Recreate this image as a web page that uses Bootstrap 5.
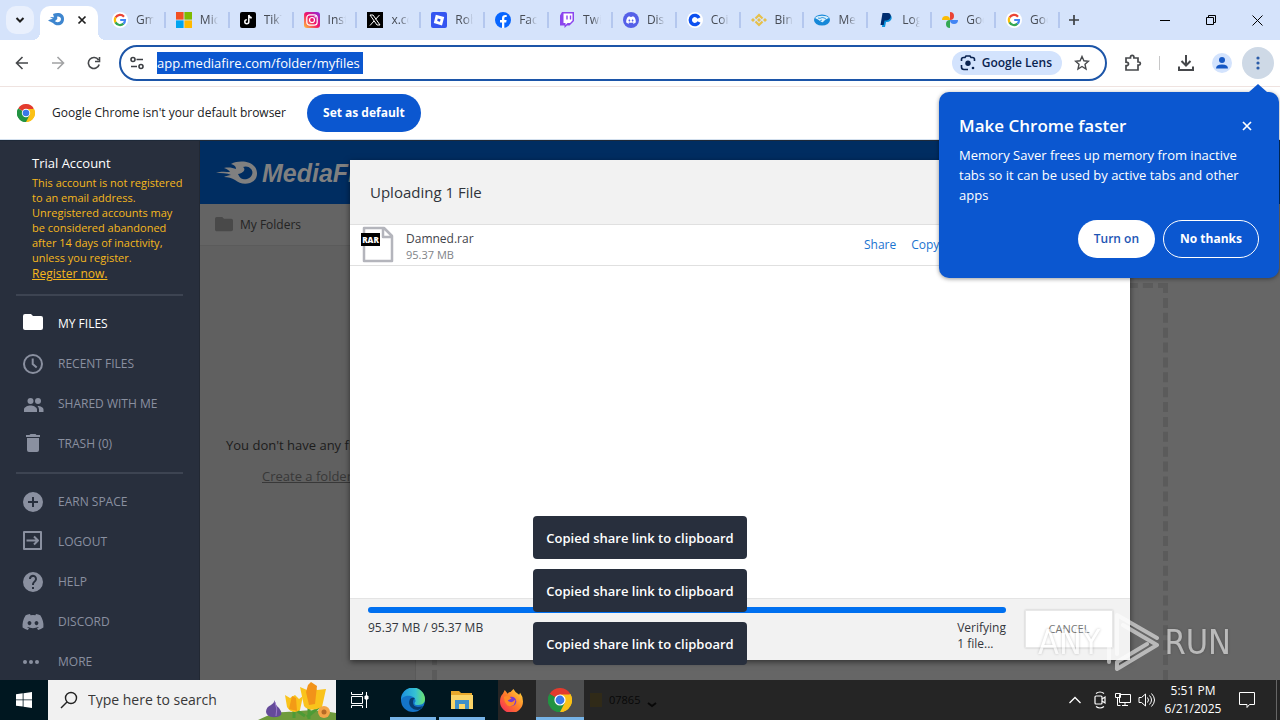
<!DOCTYPE html>
<html lang="en">
<head>
<meta charset="utf-8">
<meta name="viewport" content="width=device-width, initial-scale=1">
<title>My Files - MediaFire</title>
<link href="https://cdn.jsdelivr.net/npm/bootstrap@5.3.0/dist/css/bootstrap.min.css" rel="stylesheet">
<style>
body{font-family:"Open Sans","Noto Sans",sans-serif;font-size:12px;line-height:16px;color:#202124;height:100vh;overflow:hidden}
button{font-family:inherit}
svg{flex:none;display:block}
.bare{border:0;background:none;padding:0;color:inherit}
/* browser chrome */
.tabstrip{height:40px;background:#d5e3fb;flex:none}
.tab-menu{width:28px;height:28px;border-radius:10px;background:#e9f0fd;margin:6px 6px 0 6px}
.tab-active{width:58px;height:34px;margin-top:6px;background:#fff;border-radius:10px 10px 0 0;position:relative}
.tab-active::before,.tab-active::after{content:"";position:absolute;bottom:0;width:8px;height:8px}
.tab-active::before{right:100%;background:radial-gradient(circle at 0 0,transparent 8px,#fff 8px)}
.tab-active::after{left:100%;background:radial-gradient(circle at 100% 0,transparent 8px,#fff 8px)}
.tabs{flex:0 1 962px;min-width:0;height:40px;padding-left:4px}
.tab{flex:1 1 0;min-width:0;height:16px;border-right:2px solid #b4c7ee;padding-left:10px;gap:8px;color:#474c55;text-decoration:none}
.tab span{width:18px;overflow:hidden;white-space:nowrap;-webkit-mask-image:linear-gradient(90deg,#000 50%,transparent);mask-image:linear-gradient(90deg,#000 50%,transparent)}
.win-btn{width:46px;height:40px}
.toolbar{height:46px;background:#fff;flex:none;padding:0 6px 0 4px}
.tool{width:36px;height:36px;color:#46484b}
.omnibox{height:36px;border:2px solid #1c55a8;border-radius:18px;margin-left:7px}
.url{width:206px;height:22px;border:0;padding:0;background:#0b57d0;color:#fff;font-size:13px;outline:0}
.lens{height:24px;border-radius:12px;background:#d3e3fd;color:#0a2350;font-weight:600;padding:0 10px 0 8px;gap:6px}
.star{padding:0 15px 0 12px}
.tool-menu{width:32px;height:32px;border-radius:50%;background:#ced9e6;color:#2b5ca8;margin-left:2px}
.infobar{height:54px;border-top:1px solid #efe3e0;border-bottom:1px solid #d3e0ee;padding-left:17px;gap:17px;flex:none;background:#fff}
.pill{height:38px;border-radius:19px;padding:0 16px;font-weight:700;border:0}
.pill-blue{background:#0b57d0;color:#fff}
.pill-white{background:#fff;color:#1c55b5}
.promo{position:absolute;top:92px;right:1px;width:340px;height:186px;background:#0b57d0;border-radius:10px;color:#fff;padding:20px;z-index:30;box-shadow:0 1px 4px #0006}
.promo::before{content:"";position:absolute;right:12px;bottom:100%;border:9px solid transparent;border-top:0;border-bottom:8px solid #0b57d0}
.promo h2{font-size:17px;line-height:28px;font-weight:600;margin:0}
.promo p{font-size:13px;line-height:20px;margin:5px 0 15px}
/* web page */
.page{flex:1 1 0;min-height:0;overflow:hidden;border-top:1px solid #1e2938}
.side{width:200px;flex:none;background:#282f3d;border-right:1px solid #222833;color:#8a90a0}
.side h1{font-size:13px;line-height:20px;margin:0;color:#fff;font-weight:400}
.account{padding:12px 16px 12px 32px;color:#f6b81c}
.account p{font-size:11px;line-height:15px;margin:2px 0 1px;white-space:nowrap}
.account a{color:#f6b81c;display:block}
.rule{height:2px;background:#3d4452;margin:0 16px 8px;flex:none}
.side-link{height:40px;padding-left:21px;gap:13px;color:#8a90a0;text-decoration:none;flex:none}
.side-link.on{color:#fff}
.stage{background:#666;color:#1c1c1c;min-width:0;position:relative}
.site-head{height:63px;background:#002d61;color:#808080;padding-left:16px;flex:none}
.brand-name{font:italic 700 25px/30px "Liberation Sans",sans-serif}
.folders{width:216px;background:#606060;border-right:1px solid #5a5a5a;flex:none}
.folders-head{height:42px;background:#646464;border-bottom:1px solid #5b5b5b;padding-left:15px;gap:7px;color:#232323}
.empty{padding:189px 0 0 26px;font-size:13px;line-height:20px;white-space:nowrap}
.empty a{color:#383838;display:block;margin:11px 0 0 36px}
.dropzone{margin:79px 112px 0 16px;border:5px dashed #5b5b5b;border-bottom:0;flex:1}
.veil{position:absolute;inset:19px 0 20px;z-index:5}
.upload{width:780px;max-width:100%;background:#fff;box-shadow:0 2px 6px #0008}
.upload-head{height:65px;background:#f2f2f2;border-bottom:1px solid #e0e0e0;padding-left:20px;font-size:15px;color:#30343b}
.upload-row{height:41px;border-bottom:1px solid #e0e0e0;padding-left:10px;color:#3f444b}
.upload-row small{font-size:11px;line-height:16px;color:#808388}
.upload-row a{color:#1a73d0;text-decoration:none}
.upload-actions{gap:15px;width:266px}
.upload-foot{height:62px;background:#f2f2f2;border-top:1px solid #e4e4e4;padding:8px 17px 0 18px;gap:19px;color:#34373d}
.upload-foot .progress{height:6px;border-radius:3px;margin-bottom:7px}
.upload-foot .progress-bar{background:#0070f0}
.cancel{width:88px;height:38px;margin-top:3px;background:#fff;border:1px solid #e8e8e8;box-shadow:0 0 2px #0003;font-size:11px;color:#777}
.toasts{position:absolute;bottom:55px;left:0;right:0;z-index:10;gap:10px;pointer-events:none}
.note{height:43px;border-radius:4px;background:#282f3d;color:#fff;font-weight:600;font-size:13px;padding:0 13px}
.mark-any{position:absolute;right:49px;bottom:48px;z-index:20;color:#fff;font-family:"Liberation Sans Narrow","DejaVu Sans Condensed",sans-serif;font-size:34px;line-height:60px;gap:4px;opacity:.55;text-shadow:0 0 3px #0006;pointer-events:none}
/* taskbar */
.taskbar{height:40px;flex:none;background:#252525;color:#fff}
.task-left{background:linear-gradient(90deg,#001720 498px,#252525 498px)}
.task-btn{width:48px;height:40px;margin-right:1px}
.task-btn.open{border-bottom:3px solid #76b4e8;padding-top:3px}
.task-btn.narrow{border-image:linear-gradient(90deg,#0000 4px,#76b4e8 4px 44px,#0000 44px) 3}
.task-btn.current{background:#4e4f50}
.search{width:288px;background:#f1f1f1;color:#222;padding-left:12px;gap:10px}
.search input{border:0;background:none;outline:0;padding:0;width:160px;font-size:14px;color:#333}
.search input::placeholder{color:#383838}
.ghost{color:#080808;padding-left:6px;gap:7px;font-size:11px}
.tray{gap:7px;padding-right:3px}
.clock{width:60px;line-height:18px;text-align:center}
.show-desk{width:1px;height:40px;background:#666;margin-left:13px}
</style>
</head>
<body class="d-flex flex-column position-relative">

<svg width="0" height="0" class="position-absolute" aria-hidden="true">
 <symbol id="g" viewBox="0 0 16 16"><circle cx="8" cy="8" r="8" fill="#fff"/><g fill="none" stroke-width="2.2"><path d="M12 4.7A5.1 5.1 0 0 0 3.6 5.6" stroke="#ea4335"/><path d="M3.6 5.4a5.1 5.1 0 0 0 0 5.2" stroke="#fbbc05"/><path d="M3.5 10.4a5.1 5.1 0 0 0 8 1.2" stroke="#34a853"/><path d="M11.4 11.8A5 5 0 0 0 13 8H8.2" stroke="#4285f4"/></g></symbol>
 <symbol id="chrome" viewBox="0 0 24 24"><path d="M12 12 1.6 6A12 12 0 0 1 22.4 6z" fill="#e33b2e"/><path d="M12 12 22.4 6A12 12 0 0 1 12 24z" fill="#fbc116"/><path d="M12 12V24A12 12 0 0 1 1.6 6z" fill="#229342"/><path d="M12 6.5h10.6A12 12 0 0 1 12 24l4.8-9.2z" fill="#fbc116"/><path d="M12 24 16.8 14.8 7.2 14.7 1.6 6A12 12 0 0 0 12 24z" fill="#229342"/><circle cx="12" cy="12" r="5.6" fill="#fff"/><circle cx="12" cy="12" r="4.4" fill="#3b78e7"/></symbol>
 <symbol id="flame" viewBox="0 0 42 24"><path fill="currentColor" fill-rule="evenodd" d="M0 12c5-2 10-1 14-1-1-2-3-3-6-4 5-1 9 0 12 1 0-3-2-4-5-5 8-4 19-3 24 3 4 6 2 14-5 16-6 2-11 0-15-3-3-2-7-3-11-3 2-1 5-2 7-2-4-2-10-2-15-2zM22 13c2 5 6 6 9 5 5-1 7-7 4-10-2-3-6-3-8-2 3 2 1 6-5 7z"/></symbol>
 <symbol id="folder" viewBox="0 0 24 24"><path fill="currentColor" d="M10 4H4a2 2 0 0 0-2 2v12c0 1.100.9 2 2 2h16a2 2 0 0 0 2-2V8a2 2 0 0 0-2-2h-8z"/></symbol>
 <symbol id="disc" viewBox="0 0 24 24"><path fill="currentColor" d="M19.300 5.300A17 17 0 0 0 15 4l-.6 1.200a16 16 0 0 0-4.800 0L9 4a17 17 0 0 0-4.300 1.300C2 9.400 1.200 13.500 1.600 17.500A17 17 0 0 0 6.900 20l1.100-1.800-1.700-.8.4-.3c3.300 1.500 7.200 1.500 10.600 0l.4.3-1.700.8 1.100 1.800a17 17 0 0 0 5.300-2.500c.5-4.700-.8-8.700-3.100-12.200zM8.500 15.200c-1 0-1.900-1-1.900-2.100s.8-2.100 1.900-2.100 1.900 1 1.900 2.100-.8 2.100-1.900 2.100zm7 0c-1 0-1.900-1-1.900-2.100s.8-2.100 1.900-2.100 1.900 1 1.900 2.100-.8 2.100-1.900 2.100z"/></symbol>
</svg>

<header class="tabstrip d-flex">
 <button class="bare tab-menu d-flex align-items-center justify-content-center" aria-label="Search tabs"><svg width="10" height="8" viewBox="0 0 10 8"><path d="M1.500 2 5 5.500 8.500 2" fill="none" stroke="#1f1f1f" stroke-width="2"/></svg></button>
 <div class="tab-active d-flex align-items-start justify-content-between px-2 pt-1">
  <svg width="16" height="20" viewBox="0 -3 16 20"><path fill="#3e86cf" fill-rule="evenodd" d="M0 7.500C2 6 4 6 5 6L2 4l4 .3L5 1c5-2 11-1 11 5 0 7-8 8-11 4L0 7.500zM7 8c1 2 6 1.500 6-2 0-2-3-3-4-2 1 1 0 3-2 4z"/></svg>
  <button class="bare" aria-label="Close tab"><svg width="16" height="20" viewBox="0 -2 16 20"><path d="m4.500 4.500 7 7m0-7-7 7" stroke="#1f1f1f" stroke-width="1.700"/></svg></button>
 </div>
 <nav class="tabs d-flex align-items-center">
  <a href="#" class="tab d-flex align-items-center"><svg width="16" height="16"><use href="#g"/></svg><span>Gmail</span></a>
  <a href="#" class="tab d-flex align-items-center"><svg width="16" height="16" viewBox="0 0 16 16"><path d="M0 0h7.600v7.600H0z" fill="#f25022"/><path d="M8.400 0H16v7.600H8.400z" fill="#7fba00"/><path d="M0 8.400h7.600V16H0z" fill="#00a4ef"/><path d="M8.400 8.400H16V16H8.400z" fill="#ffb900"/></svg><span>Micro</span></a>
  <a href="#" class="tab d-flex align-items-center"><svg width="16" height="16" viewBox="0 0 16 16"><rect width="16" height="16" rx="2" fill="#000"/><path d="M8.800 3v6.800a2 2 0 1 1-2-2M8.800 3c.3 1.700 1.400 2.700 3 2.800" fill="none" stroke="#fff" stroke-width="1.500"/></svg><span>TikTok</span></a>
  <a href="#" class="tab d-flex align-items-center"><svg width="16" height="16" viewBox="0 0 16 16"><defs><linearGradient id="ig" x1="0" y1="1" x2="1" y2="0"><stop stop-color="#ffc43a"/><stop offset=".5" stop-color="#f0146a"/><stop offset="1" stop-color="#8a2be2"/></linearGradient></defs><rect width="16" height="16" rx="3" fill="url(#ig)"/><g fill="none" stroke="#fff" stroke-width="1.200"><rect x="2.800" y="2.800" width="10.400" height="10.400" rx="3"/><circle cx="8" cy="8" r="2.500"/></g><circle cx="11.200" cy="4.800" r=".8" fill="#fff"/></svg><span>Instag</span></a>
  <a href="#" class="tab d-flex align-items-center"><svg width="16" height="16" viewBox="0 0 16 16"><path fill="#000" d="M0 0h16v16H0z"/><path d="m3 3 7 10h3L6 3zM12.500 3l-4 4.400M7 9l-4 4.500" fill="none" stroke="#fff"/></svg><span>x.com</span></a>
  <a href="#" class="tab d-flex align-items-center"><svg width="16" height="16" viewBox="0 0 16 16"><rect width="16" height="16" rx="2" fill="#3555f0"/><path fill="#fff" fill-rule="evenodd" d="m4.800 2.800 8.400 2.200-2.200 8.400L2.800 11zm2 3.700-.6 2.600 2.800.7.600-2.600z"/></svg><span>Roblox</span></a>
  <a href="#" class="tab d-flex align-items-center"><svg width="16" height="16" viewBox="0 0 16 16"><circle cx="8" cy="8" r="8" fill="#0866ff"/><path fill="#fff" d="M7 16v-5.500H5V8h2V6.300C7 4 8.300 3 10.500 3l1.200.1v2h-1C9.600 5.100 9.300 5.700 9.300 6.500V8h2.300l-.4 2.500H9.300V16z"/></svg><span>Faceb</span></a>
  <a href="#" class="tab d-flex align-items-center"><svg width="16" height="16" viewBox="0 0 16 16"><path fill="#8b45ee" d="M3 0h12v9l-4.500 4.500H8L5.500 16v-2.500H1v-10z"/><path fill="#fff" d="M4.500 1.500h9v7l-2.500 2.500H8.500l-2 2v-2h-2z"/><path d="M8 3.500v4m3.500-4v4" stroke="#8b45ee" stroke-width="1.400"/></svg><span>Twitch</span></a>
  <a href="#" class="tab d-flex align-items-center"><svg width="16" height="16" viewBox="0 0 16 16"><circle cx="8" cy="8" r="8" fill="#5560e8"/><svg x="2.500" y="2.500" width="11" height="11" color="#fff"><use href="#disc"/></svg></svg><span>Disco</span></a>
  <a href="#" class="tab d-flex align-items-center"><svg width="16" height="16" viewBox="0 0 16 16"><circle cx="8" cy="8" r="8" fill="#fff"/><path d="M12 6a4.600 4.600 0 1 0 0 4" fill="none" stroke="#0c50f0" stroke-width="3.400"/></svg><span>Coinb</span></a>
  <a href="#" class="tab d-flex align-items-center"><svg width="16" height="16" viewBox="0 0 16 16"><g fill="none" stroke="#e6c04a" stroke-width="2.200"><path d="M4.500 6.500 8 3l3.500 3.500m-7 3L8 13l3.500-3.500"/></g><path fill="#e6c04a" d="m8 6 2 2-2 2-2-2zM2 6l2 2-2 2-2-2zm12 0 2 2-2 2-2-2z"/></svg><span>Binan</span></a>
  <a href="#" class="tab d-flex align-items-center"><svg width="16" height="16" viewBox="0 0 16 16"><ellipse cx="8" cy="8" rx="8" ry="5.500" fill="#1688d8"/><path fill="#d8effc" d="M1 6c2-3 12-3 14 0-2 1-3 1-4 2l-2 2c-1 .5-2 0-3-1C4 7.500 3 7 1 6z"/><path d="M4 6q2 1 4-.5 2 0 4 1.500M6 9l2-1" fill="none" stroke="#1688d8" stroke-width=".8"/></svg><span>Merca</span></a>
  <a href="#" class="tab d-flex align-items-center"><svg width="16" height="16" viewBox="0 0 16 16"><path fill="#0b93dc" d="M5 3h7c3 1 2 7-3 7H8l-1 5H4z"/><path fill="#002d70" d="M4.500 1H10c4 0 4 7-1.500 7.500H6.500L5.700 13H2.500z"/></svg><span>Log in</span></a>
  <a href="#" class="tab d-flex align-items-center"><svg width="16" height="16" viewBox="0 0 16 16"><path fill="#ea4335" d="M8 0a4 4 0 0 1 0 8z"/><path fill="#4285f4" d="M16 8a4 4 0 0 1-8 0z"/><path fill="#34a853" d="M8 16a4 4 0 0 1 0-8z"/><path fill="#fbbc04" d="M0 8a4 4 0 0 1 8 0z"/></svg><span>Goog</span></a>
  <a href="#" class="tab d-flex align-items-center"><svg width="16" height="16"><use href="#g"/></svg><span>Goog</span></a>
 </nav>
 <button class="bare px-2" aria-label="New tab"><svg width="12" height="12" viewBox="0 0 12 12"><path d="M6 1v10M1 6h10" stroke="#3c4043" stroke-width="1.700"/></svg></button>
 <div class="d-flex ms-auto">
  <button class="bare win-btn d-flex align-items-center justify-content-center" aria-label="Minimize"><svg width="10" height="10"><path d="M0 5.500h10" stroke="#000"/></svg></button>
  <button class="bare win-btn d-flex align-items-center justify-content-center" aria-label="Restore"><svg width="10" height="10"><path d="M.500 2.500h7v7h-7zM2.500 2.500v-2h7v7h-2" fill="none" stroke="#000"/></svg></button>
  <button class="bare win-btn d-flex align-items-center justify-content-center" aria-label="Close"><svg width="11" height="11"><path d="m.500.500 10 10m0-10-10 10" stroke="#000"/></svg></button>
 </div>
</header>

<div class="toolbar d-flex align-items-center">
 <button class="bare tool d-flex align-items-center justify-content-center" aria-label="Back"><svg width="14" height="14" viewBox="0 0 14 14"><path d="M13 7H2m5.500-6L1.500 7l6 6" fill="none" stroke="currentColor" stroke-width="1.600"/></svg></button>
 <button class="bare tool d-flex align-items-center justify-content-center opacity-50" aria-label="Forward"><svg width="14" height="14" viewBox="0 0 14 14"><path d="M1 7h11M6.500 1l6 6-6 6" fill="none" stroke="currentColor" stroke-width="1.600"/></svg></button>
 <button class="bare tool d-flex align-items-center justify-content-center" aria-label="Reload"><svg width="14" height="14" viewBox="0 0 14 14"><path d="M12.200 8.500A5.500 5.500 0 1 1 11.500 4M12.500 1v4.500H8" fill="none" stroke="currentColor" stroke-width="1.600"/></svg></button>
 <div class="omnibox d-flex align-items-center flex-grow-1">
  <button class="bare ps-2 pe-2 me-1" aria-label="Site information"><svg width="16" height="14" viewBox="0 0 16 14"><g fill="none" stroke="#3c3f43" stroke-width="1.600"><circle cx="4" cy="3.500" r="2"/><path d="M7.500 3.500H14M2 10.500h6"/><circle cx="12" cy="10.500" r="2"/></g></svg></button>
  <input class="url" type="text" aria-label="Address" value="app.mediafire.com/folder/myfiles">
  <button class="bare lens d-flex align-items-center ms-auto"><svg width="16" height="16" viewBox="0 0 16 16"><path d="M1.500 6V4.500q0-2 2-2H5l1-1.500h4l1 1.500h1.500q2 0 2 2V6M1.500 10v2q0 2.500 2.500 2.500h4" fill="none" stroke="currentColor" stroke-width="1.600"/><circle cx="8" cy="8.200" r="2.700" fill="currentColor"/><circle cx="13" cy="13" r="1.300" fill="currentColor"/></svg>Google Lens</button>
  <button class="bare star" aria-label="Bookmark"><svg width="16" height="16" viewBox="0 0 16 16"><path d="m8 1.500 1.900 4.300 4.600.4L11 9.300l1 4.700-4-2.500L4 14l1-4.700L1.500 6.200l4.600-.4z" fill="none" stroke="#46484b" stroke-width="1.400"/></svg></button>
 </div>
 <button class="bare tool d-flex align-items-center justify-content-center ms-2" aria-label="Extensions"><svg width="18" height="18" viewBox="0 0 18 18"><path d="M2 4h4.500V3a1.700 1.700 0 0 1 3.400 0v1H14v4h.800a1.600 1.600 0 0 1 0 3.200H14V16H2v-4.300q2.500-.200 2.500-1.800T2 8.200z" fill="none" stroke="currentColor" stroke-width="1.700"/></svg></button>
 <div class="vr mx-2 my-3"></div>
 <button class="bare tool d-flex align-items-center justify-content-center" aria-label="Downloads"><svg width="18" height="18" viewBox="0 0 18 18"><path d="M9 1v10M4.500 7 9 11.500 13.500 7M2 12.500V16h14v-3.500" fill="none" stroke="currentColor" stroke-width="2"/></svg></button>
 <button class="bare tool d-flex align-items-center justify-content-center" aria-label="Profile"><svg width="20" height="20" viewBox="0 0 20 20"><circle cx="10" cy="10" r="10" fill="#d3e3fd"/><circle cx="10" cy="7" r="3" fill="#1658c4"/><path d="M4 15.500q0-4 6-4t6 4z" fill="#1658c4"/></svg></button>
 <button class="bare tool-menu d-flex align-items-center justify-content-center" aria-label="Menu"><svg width="4" height="14" fill="currentColor"><circle cx="2" cy="2" r="1.600"/><circle cx="2" cy="7" r="1.600"/><circle cx="2" cy="12" r="1.600"/></svg></button>
</div>

<div class="infobar d-flex align-items-center">
 <svg width="18" height="18"><use href="#chrome"/></svg>
 <span class="me-1">Google Chrome isn't your default browser</span>
 <button class="pill pill-blue">Set as default</button>
</div>

<aside class="promo">
 <div class="d-flex justify-content-between align-items-center"><h2>Make Chrome faster</h2><button class="bare px-1" aria-label="Dismiss"><svg width="16" height="16"><path d="m4 4 8 8m0-8-8 8" stroke="#fff" stroke-width="1.700"/></svg></button></div>
 <p>Memory Saver frees up memory from inactive tabs so it can be used by active tabs and other apps</p>
 <div class="d-flex justify-content-end gap-2"><button class="pill pill-white fw-semibold">Turn on</button><button class="pill pill-blue border border-white">No thanks</button></div>
</aside>

<main class="page d-flex">
 <nav class="side d-flex flex-column">
  <div class="account"><h1>Trial Account</h1>
   <p>This account is not registered<br>to an email address.<br>Unregistered accounts may<br>be considered abandoned<br>after 14 days of inactivity,<br>unless you register.</p><a href="#">Register now.</a></div>
  <div class="rule"></div>
  <a href="#" class="side-link on d-flex align-items-center"><svg width="24" height="24" viewBox="0 2 24 24"><use href="#folder" width="24" height="24"/></svg>MY FILES</a>
  <a href="#" class="side-link d-flex align-items-center"><svg width="24" height="24" viewBox="0 0 24 24"><g fill="none" stroke="currentColor" stroke-width="2"><circle cx="12" cy="12" r="9"/><path d="M11.700 6.500V12l4 3.500"/></g></svg>RECENT FILES</a>
  <a href="#" class="side-link d-flex align-items-center"><svg width="24" height="24" viewBox="0 0 24 24" fill="currentColor"><circle cx="9.500" cy="9" r="3"/><circle cx="17" cy="9" r="3"/><path d="M3 20v-2.500c0-2.500 4-4 6.500-4s6.500 1.500 6.500 4V20zM18 20v-2.500q0-2-1.500-3.500c3 0 6 1.500 6 3.500V20z"/></svg>SHARED WITH ME</a>
  <a href="#" class="side-link d-flex align-items-center"><svg width="24" height="24" viewBox="0 1 24 24" fill="currentColor"><path d="M6 7h12v12a2 2 0 0 1-2 2H8a2 2 0 0 1-2-2zM5 4h3.500l1-1h5l1 1H19v2H5z"/></svg>TRASH (0)</a>
  <div class="rule mt-2"></div>
  <a href="#" class="side-link d-flex align-items-center"><svg width="24" height="24" viewBox="0 0 24 24"><path fill="currentColor" d="M12 2a10 10 0 1 0 0 20 10 10 0 0 0 0-20zm5 11h-4v4h-2v-4H7v-2h4V7h2v4h4z"/></svg>EARN SPACE</a>
  <a href="#" class="side-link d-flex align-items-center"><svg width="24" height="24" viewBox="0 1 24 24"><path d="M3 8V3h17v17H3v-5M5.500 11.500H17M13 7.500l4 4-4 4M3 8v8" fill="none" stroke="currentColor" stroke-width="2" stroke-linejoin="round"/></svg>LOGOUT</a>
  <a href="#" class="side-link d-flex align-items-center"><svg width="24" height="24" viewBox="0 0 24 24"><path fill="currentColor" d="M12 2a10 10 0 1 0 0 20 10 10 0 0 0 0-20zm1 17h-2v-2h2zm2.100-7.700-.9.900C13.400 12.900 13 13.500 13 15h-2v-.5c0-1.100.4-2.100 1.200-2.800l1.200-1.300A2 2 0 1 0 10 9H8a4 4 0 1 1 7.100 2.300z"/></svg>HELP</a>
  <a href="#" class="side-link d-flex align-items-center"><svg width="24" height="24"><use href="#disc"/></svg>DISCORD</a>
  <a href="#" class="side-link d-flex align-items-center"><svg width="24" height="24" fill="currentColor"><circle cx="4" cy="12" r="2"/><circle cx="10" cy="12" r="2"/><circle cx="16" cy="12" r="2"/></svg>MORE</a>
 </nav>
 <section class="stage d-flex flex-column flex-grow-1">
  <div class="site-head d-flex align-items-center"><svg width="42" height="24"><use href="#flame"/></svg><span class="brand-name ms-1">MediaFire</span></div>
  <div class="d-flex flex-grow-1">
   <div class="folders">
    <div class="folders-head d-flex align-items-center"><svg width="18" height="20" viewBox="2 3 20 20" color="#494949"><use href="#folder" width="24" height="24"/></svg>My Folders</div>
    <div class="empty">You don't have any files.<a href="#">Create a folder</a></div>
   </div>
   <div class="dropzone"></div>
  </div>
  <div class="veil d-flex justify-content-center">
   <div class="upload d-flex flex-column">
    <div class="upload-head d-flex align-items-center">Uploading 1 File</div>
    <div class="upload-row d-flex align-items-center">
     <svg width="34" height="38" viewBox="0 0 34 38"><path d="M4 2h20l8 8v25H4zM23 2v9h9" fill="#fff" stroke="#b4b5bc" stroke-width="2.500" stroke-linejoin="round"/><path d="M1 7h19v13H1z"/><text x="10.500" y="17" fill="#fff" font-size="8" font-weight="800" text-anchor="middle">RAR</text></svg>
     <div class="d-flex flex-column ms-2 ps-1 pt-1"><span>Damned.rar</span><small>95.37 MB</small></div>
     <div class="upload-actions d-flex ms-auto"><a href="#">Share</a><a href="#">Copy</a></div>
    </div>
    <div class="flex-grow-1"></div>
    <div class="upload-foot d-flex">
     <div class="flex-grow-1">
      <div class="progress" role="progressbar" aria-label="Upload" aria-valuenow="100" aria-valuemin="0" aria-valuemax="100"><div class="progress-bar w-100"></div></div>
      <div class="d-flex justify-content-between"><span>95.37 MB / 95.37 MB</span><span>Verifying<br>1 file...</span></div>
     </div>
     <button class="cancel">CANCEL</button>
    </div>
   </div>
  </div>
 </section>
</main>

<div class="toasts d-flex flex-column align-items-center">
 <div class="note d-flex align-items-center">Copied share link to clipboard</div>
 <div class="note d-flex align-items-center">Copied share link to clipboard</div>
 <div class="note d-flex align-items-center">Copied share link to clipboard</div>
</div>
<div class="mark-any d-flex align-items-center"><span>ANY</span><svg width="56" height="60" viewBox="0 0 56 60"><g fill="none" stroke="#fff" stroke-width="4" stroke-linejoin="round" stroke-linecap="round"><path d="M13 42V3l40 23M13 18v20M13 57l40-24-34-20M13 57v-7l30-18"/><path d="M5 50V8"/></g></svg><span>RUN</span></div>

<footer class="taskbar d-flex">
 <div class="task-left d-flex">
  <button class="bare px-3" aria-label="Start"><svg width="16" height="16" fill="#fff"><path d="M0 2.300 6.700 1.300v6.200H0zM7.500 1.200 16 0v7.500H7.500zM0 8.300h6.700v6.300L0 13.700zM7.500 8.300H16V16l-8.500-1.200z"/></svg></button>
  <div class="search d-flex align-items-center overflow-hidden">
   <svg width="18" height="18"><circle cx="11" cy="7" r="5.500" fill="none" stroke="#222" stroke-width="1.400"/><path d="M7 11l-6 6" stroke="#222" stroke-width="1.400"/></svg>
   <input type="text" aria-label="Search" placeholder="Type here to search">
   <svg width="78" height="40" class="ms-auto" viewBox="0 0 78 40"><path d="M0 40q18-10 38-8 12-4 40 1v7z" fill="#6f9b3c"/><path d="M17 20q-1 4 4 8 6 8-3 9-9 1-10-5 0-5 5-7 3-2 4-5z" fill="#654b9a"/><path d="M17 22q3 7 1 14" stroke="#9c7ccb" fill="none"/><path d="M36 38V26M51 39V22m-4 14-12-8m14 9 13-11" stroke="#4c9b36" stroke-width="3" fill="none"/><path d="M27 15l5 3 5-3 4 4 4-3-3 14q-8 5-13-3z" fill="#fac31b"/><path d="m34 16-3 13 8 2-1-13z" fill="#f39b16"/><path d="m42 7 7 3 4-6 6 6 9-1-4 18q-12 6-18-1z" fill="#fac31b"/><path d="m50 5 3-3 6 4-2 18-6 1-3-13z" fill="#f29319"/><circle cx="66" cy="32" r="6" fill="#f4a548"/><circle cx="66" cy="32" r="2.500" fill="#b66a25"/></svg>
  </div>
  <button class="bare task-btn d-flex align-items-center justify-content-center" aria-label="Task view"><svg width="18" height="16" viewBox="0 0 18 16" fill="none" stroke="#fff"><path d="M.500 0v2.500h11V0M.500 16v-2.500h11V16M.500 4.500h11v7H.500zM15.500 0v16"/><path d="M14 4h3v3h-3z" fill="#fff"/></svg></button>
  <button class="bare task-btn open narrow d-flex align-items-center justify-content-center ms-1" aria-label="Edge"><svg width="24" height="24" viewBox="0 0 24 24"><defs><linearGradient id="e1"><stop stop-color="#1b8fe0"/><stop offset=".6" stop-color="#35c1d4"/><stop offset="1" stop-color="#6ee36a"/></linearGradient></defs><circle cx="12" cy="12" r="12" fill="#1474c8"/><path d="M0 12a12 12 0 0 1 24-1c0 5-4 6-8 6-3 0-3-2-1.500-3.500C15 9 9 7 5 8q-4 1-5 4z" fill="url(#e1)"/><path d="M9 11c-3 6 2 11 8 11q3-.500 5-4-10 3-10-4 0-3 2-4-3-1-5 1z" fill="#073b70"/></svg></button>
  <button class="bare task-btn open narrow d-flex align-items-center justify-content-center" aria-label="File Explorer"><svg width="22" height="20" viewBox="0 0 22 20"><path d="M0 1h8l2 2h11v15H0z" fill="#e9a92c"/><path d="M0 5h22v14H0z" fill="#fbd568"/><path d="M4 19v-9h14v9h-4v-5H8v5z" fill="#3f8fc9"/></svg></button>
  <button class="bare task-btn d-flex align-items-center justify-content-center" aria-label="Firefox"><svg width="23" height="23" viewBox="0 0 24 24"><defs><linearGradient id="ff" x1="1" y1="0" x2="0" y2="1"><stop stop-color="#ffe13a"/><stop offset=".5" stop-color="#ff7a2a"/><stop offset="1" stop-color="#f5205f"/></linearGradient></defs><path d="M3 5l2-4 3 4q1-2 3-2l3-3q2 4 6 6l1-2q3 4 3 9a12 12 0 0 1-24 0q0-5 3-8z" fill="url(#ff)"/><circle cx="12" cy="13" r="5" fill="#7a3bd0"/><path d="M4 8q5-2 8 2l-4 2q4 4 8-1 0 7-6 7-5-1-6-10z" fill="#ff8a26"/></svg></button>
  <button class="bare task-btn open current d-flex align-items-center justify-content-center m-0" aria-label="Chrome"><svg width="24" height="24"><use href="#chrome"/></svg></button>
 </div>
 <div class="ghost d-flex align-items-center"><svg width="12" height="14"><path d="M0 0h12v14H0z" fill="#302a18"/></svg>07865<svg width="10" height="16"><path d="m1 11 4 3 4-3" fill="none" stroke="#080808" stroke-width="2"/></svg></div>
 <div class="tray d-flex align-items-center ms-auto">
  <svg width="12" height="8"><path d="m.500 7 5.500-5.500L11.500 7" fill="none" stroke="#fff" stroke-width="1.300"/></svg>
  <svg width="16" height="18" viewBox="0 0 16 18" fill="none" stroke="#fff" stroke-width="1.200" class="ms-1"><rect x="3" y="5" width="7" height="8" rx="1"/><path d="m10 8 3-2v6l-3-2M4 2.500q4-3 8 0M4 15.500q4 3 8 0"/></svg>
  <svg width="16" height="16" fill="none" stroke="#fff"><path d="M4.500 2.500h11v8h-11zM10 10.500v3M7 13.500h6M.500 1.500h5v4h-5zM2.500 5.500v8h3"/></svg>
  <svg width="18" height="16" fill="none" stroke="#fff"><path d="M1 5.500h2.500L7.500 2v12l-4-3.500H1zM9.500 5.500q2 2.500 0 5M11.500 3.500q4 4.500 0 9M13.500 1.500q6 6.500 0 13"/></svg>
  <div class="clock">5:51 PM<br>6/21/2025</div>
  <svg width="18" height="18" class="ms-2" fill="none" stroke="#fff"><path d="M1.500 1.500h15v12h-5l-2.500 3v-3H1.500z"/></svg>
  <div class="show-desk"></div>
 </div>
</footer>
<script src="https://cdn.jsdelivr.net/npm/bootstrap@5.3.0/dist/js/bootstrap.bundle.min.js"></script>
</body>
</html>
